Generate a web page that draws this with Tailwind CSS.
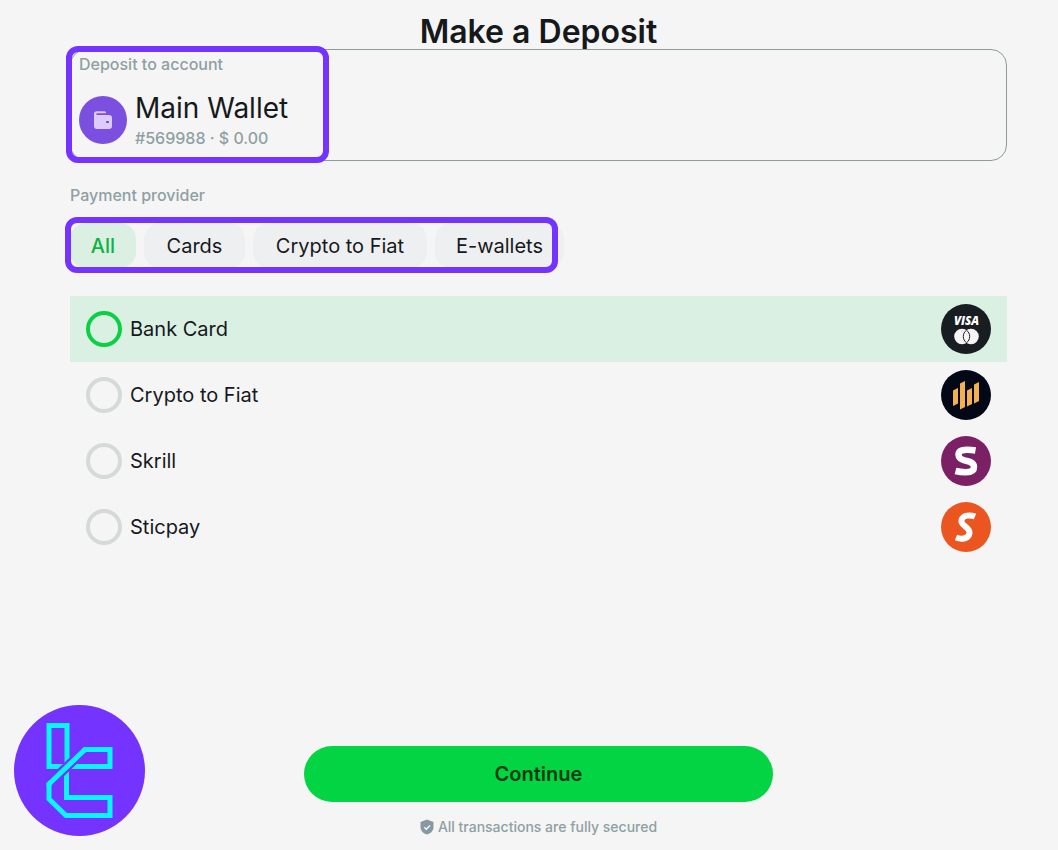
<!DOCTYPE html>
<html lang="en">
<head>
    <meta charset="UTF-8">
    <meta name="viewport" content="width=device-width, initial-scale=1.0">
    <title>Make a Deposit</title>
    <script src="https://cdn.jsdelivr.net/npm/@tailwindcss/browser@4"></script>
</head>
<body class="bg-[#f5f5f5] font-['Inter',sans-serif] text-[#15191c]">

    <main class="relative flex min-h-screen flex-col pt-3.5 pr-[51px] pb-3 pl-[70px]">
        <h1 class="text-center text-[32px] leading-[35px] font-semibold">Make a Deposit</h1>

        <!-- Account -->
        <section class="relative h-28 rounded-2xl border border-[#8f9a9e] px-2 pt-1">
            <p class="text-base leading-5 font-medium text-[#8f9fa3]">Deposit to account</p>
            <div class="mt-4 flex items-center gap-2">
                <span class="flex size-12 items-center justify-center rounded-full bg-[#7b4fe0]">
                    <svg class="size-5" viewBox="0 0 20 20" fill="none">
                        <path d="M1 4.500A3 3 0 0 1 4 1.300H11.500a1.500 1.500 0 0 1 1.500 1.500V3.300H3.500V5H16a3 3 0 0 1 3 3v8a3 3 0 0 1-3 3H4a3 3 0 0 1-3-3z" fill="#dccbfb"/>
                        <rect x="13" y="11" width="3" height="2" rx="1" fill="#6a40cc"/>
                    </svg>
                </span>
                <div>
                    <p class="text-[28px] leading-9">Main Wallet</p>
                    <p class="text-base leading-6 font-medium text-[#8f9fa3]">#569988 · $ 0.00</p>
                </div>
            </div>
            <!-- highlight -->
            <div class="pointer-events-none absolute -top-1 -left-[5px] h-[117px] w-[263px] rounded-xl border-6 border-[#7433ff]"></div>
        </section>

        <!-- Provider filter -->
        <h2 class="mt-6 text-base leading-5 font-medium text-[#8f9fa3]">Payment provider</h2>
        <div class="relative mt-[18px] flex gap-2 self-start text-xl">
            <button type="button" class="h-[45px] w-[66px] rounded-2xl bg-[#dbf0e2] font-medium text-[#0bb443]">All</button>
            <button type="button" class="h-[45px] w-[101px] rounded-2xl bg-[#eeeff0]">Cards</button>
            <button type="button" class="h-[45px] w-[174px] rounded-2xl bg-[#eeeff0]">Crypto to Fiat</button>
            <button type="button" class="h-[45px] w-[129px] rounded-2xl bg-[#eeeff0]">E-wallets</button>
            <!-- highlight -->
            <div class="pointer-events-none absolute -top-1.5 -left-[5px] h-14 w-[493px] rounded-xl border-6 border-[#7433ff]"></div>
        </div>

        <!-- Providers -->
        <div class="mt-7 text-xl">
            <label class="flex h-[66px] items-center gap-2 px-4 has-checked:bg-[#daf0e2]">
                <input type="radio" name="provider" checked class="size-9 appearance-none rounded-full border-4 border-[#d5dad9] checked:border-[#0bd046]">
                <span class="flex-1">Bank Card</span>
                <svg class="size-[50px]" viewBox="0 0 50 50">
                    <circle cx="25" cy="25" r="25" fill="#171d21"/>
                    <text x="25.500" y="21" text-anchor="middle" font-family="Open Sans, sans-serif" font-size="11.500" font-weight="800" font-style="italic" fill="#fff">VISA</text>
                    <circle cx="21" cy="32.500" r="7.800" fill="#f5f5f5"/>
                    <circle cx="30" cy="32.500" r="7.800" fill="#f5f5f5"/>
                    <path d="M25.500 26.200a7.800 7.800 0 0 1 0 12.600a7.800 7.800 0 0 1 0-12.600z" fill="#f5f5f5" stroke="#171d21"/>
                </svg>
            </label>
            <label class="flex h-[66px] items-center gap-2 px-4 has-checked:bg-[#daf0e2]">
                <input type="radio" name="provider" class="size-9 appearance-none rounded-full border-4 border-[#d5dad9] checked:border-[#0bd046]">
                <span class="flex-1">Crypto to Fiat</span>
                <svg class="size-[50px]" viewBox="0 0 50 50">
                    <circle cx="25" cy="25" r="25" fill="#030817"/>
                    <path d="M12 20.500l5-2.500v15.500l-5 2.500zM19 13.500l5-2.500v26l-5 2.500zM26 20.500l5-2.500v16l-5 2.500zM33 14.500l5-2.500v19l-5 2.500z" fill="#f4b04f"/>
                </svg>
            </label>
            <label class="flex h-[66px] items-center gap-2 px-4 has-checked:bg-[#daf0e2]">
                <input type="radio" name="provider" class="size-9 appearance-none rounded-full border-4 border-[#d5dad9] checked:border-[#0bd046]">
                <span class="flex-1">Skrill</span>
                <svg class="size-[50px]" viewBox="0 0 50 50">
                    <circle cx="25" cy="25" r="25" fill="#7b2064"/>
                    <path d="M34.500 14.500C31.500 14 28.500 13.800 26 13.800C20.500 13.800 17.500 15.500 17.500 18.800C17.500 22.800 21 24 26 25C30.500 26 33 27.500 33 31C33 34.500 30 36.200 25 36.200C21 36.200 17.500 35.800 14.500 35" fill="none" stroke="#fff" stroke-width="6.500"/>
                </svg>
            </label>
            <label class="flex h-[66px] items-center gap-2 px-4 has-checked:bg-[#daf0e2]">
                <input type="radio" name="provider" class="size-9 appearance-none rounded-full border-4 border-[#d5dad9] checked:border-[#0bd046]">
                <span class="flex-1">Sticpay</span>
                <svg class="size-[50px]" viewBox="0 0 50 50">
                    <circle cx="25" cy="25" r="25" fill="#ea5520"/>
                    <path d="M34 14.500C29 12.500 22 13 20.500 18C19 23.500 29 25 28.500 31C28 36.500 21 38 15 35.500" fill="none" stroke="#fff" stroke-width="6"/>
                </svg>
            </label>
        </div>

        <footer class="mt-auto flex flex-col items-center gap-3.5">
            <button type="button" class="h-14 w-1/2 rounded-full bg-[#03d443] text-xl font-semibold text-[#073c10]">Continue</button>
            <p class="flex items-center gap-1 text-sm leading-[22px] font-medium text-[#8f9fa3]">
                <svg class="h-4 w-3.5" viewBox="0 0 14 16" fill="none">
                    <path d="M7 .5L13.500 3v5c0 4-3 6.500-6.500 7.500C3.500 14.500.5 12 .5 8V3z" fill="#8699a3"/>
                    <path d="M4.300 8.200l2 2l3.700-3.800" stroke="#f5f5f5" stroke-width="1.500"/>
                </svg>
                All transactions are fully secured
            </p>
        </footer>

        <!-- Logo badge -->
        <svg class="absolute bottom-3.5 left-3.5 size-[131px]" viewBox="9 10 131 131" fill="none">
            <circle cx="74.500" cy="75.500" r="65.500" fill="#7433ff"/>
            <g stroke="#08f7ff" stroke-width="5">
                <path d="M62 68V30.500H44V71.500H59"/>
                <path d="M61.500 72V102.500H105V120.500H61L44 104V89L80 54.500H105V71.500H66"/>
            </g>
            <!-- the diagonal runs over the stem -->
            <path d="M46 87L78 56.400" stroke="#7433ff" stroke-width="9.500"/>
            <path d="M44 91V89L80 54.500H83" stroke="#08f7ff" stroke-width="5"/>
        </svg>
    </main>

</body>
</html>
